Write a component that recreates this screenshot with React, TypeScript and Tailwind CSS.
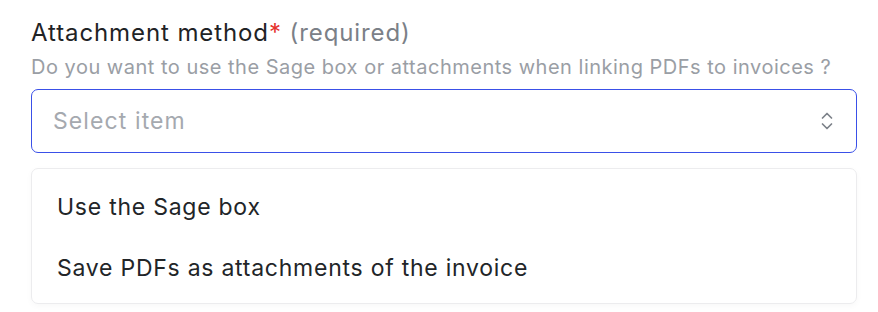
import React from "react";

export default function App() {
  return (
    <div className="w-[878px] h-[312px] bg-white pl-[31px] pr-[21px] pt-[18px]" style={{ fontFamily: "Inter, 'Noto Sans', sans-serif" }}>
      <div className="text-[24px] leading-[30px] tracking-[0.9px] text-[#1f2326]">
        Attachment method<span className="text-[#e5322d]">*</span>{" "}
        <span className="text-[#7b8087]">(required)</span>
      </div>
      <div className="text-[20px] leading-[26px] tracking-[0.5px] text-[#9a9ea5] mt-[6px]">
        Do you want to use the Sage box or attachments when linking PDFs to invoices ?
      </div>
      <div className="mt-[9px] h-[64px] border border-[#3a50e8] rounded-[7px] flex items-center justify-between pl-[21px] pr-[22px]">
        <span className="text-[23px] tracking-[1.1px] text-[#a5a9af]">Select item</span>
        <svg width="14" height="22" viewBox="0 0 14 22" fill="none" stroke="#7d828a" strokeWidth="1.7" strokeLinecap="round" strokeLinejoin="round">
          <path d="M2.5 8 L7 3.5 L11.5 8" />
          <path d="M2.5 14 L7 18.5 L11.5 14" />
        </svg>
      </div>
      <div className="mt-[15px] h-[136px] border border-[#ececee] rounded-[7px] shadow-[0_2px_6px_rgba(0,0,0,0.03)] flex flex-col justify-center pt-[4px] pl-[25px] gap-[36px]">
        <div className="text-[23px] leading-[25px] tracking-[0.75px] text-[#222528]">Use the Sage box</div>
        <div className="text-[23px] leading-[25px] tracking-[0.75px] text-[#222528]">Save PDFs as attachments of the invoice</div>
      </div>
    </div>
  );
}
